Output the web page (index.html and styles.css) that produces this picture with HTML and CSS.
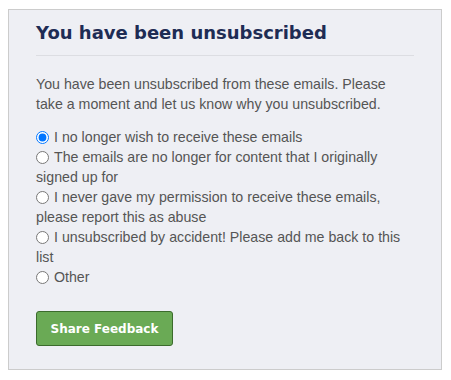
FILE: index.html
```html
<!DOCTYPE html>
<html>
<head>
<meta charset="utf-8">
<link rel="stylesheet" href="styles.css">
</head>
<body>
<div class="card">
  <h1 class="title">You have been unsubscribed</h1>
  <p class="intro">You have been unsubscribed from these emails. Please take a moment and let us know why you unsubscribed.</p>
  <form class="reasons">
    <label class="reason"><input type="radio" name="r" checked>I no longer wish to receive these emails</label>
    <label class="reason"><input type="radio" name="r">The emails are no longer for content that I originally signed up for</label>
    <label class="reason"><input type="radio" name="r">I never gave my permission to receive these emails, please report this as abuse</label>
    <label class="reason"><input type="radio" name="r">I unsubscribed by accident! Please add me back to this list</label>
    <label class="reason"><input type="radio" name="r">Other</label>
    <button type="button" class="btn">Share Feedback</button>
  </form>
</div>
</body>
</html>
```
FILE: styles.css
```css
html, body { margin: 0; padding: 0; background: #fff; }
body { padding: 9px 0 0 8px; }
.card {
  width: 378px;
  padding: 11px 27px 23px 27px;
  background: #eeeff4;
  border: 1px solid #cccccc;
  font-family: "Liberation Sans", Arial, sans-serif;
  font-size: 14.2px;
  line-height: 20px;
  color: #555;
}
.title {
  margin: 0;
  padding-bottom: 10px;
  border-bottom: 1px solid #dcdde2;
  font-family: "DejaVu Sans", Verdana, sans-serif;
  font-weight: bold;
  font-size: 18px;
  line-height: 24px;
  color: #1e2c54;
}
.intro { margin: 18px 0 13px 0; }
.reasons { margin: 0; }
.reason { display: block; }
.reason input {
  margin: 0 5px 0 0;
  width: 13px;
  height: 13px;
  vertical-align: -2px;
}
.btn {
  margin-top: 24px;
  width: 137px;
  height: 35px;
  padding: 0;
  background: #6aaa55;
  border: 1px solid #3b6b2c;
  border-radius: 3px;
  color: #fff;
  font-family: "DejaVu Sans", Verdana, sans-serif;
  font-weight: bold;
  font-size: 12px;
  display: block;
}
```
